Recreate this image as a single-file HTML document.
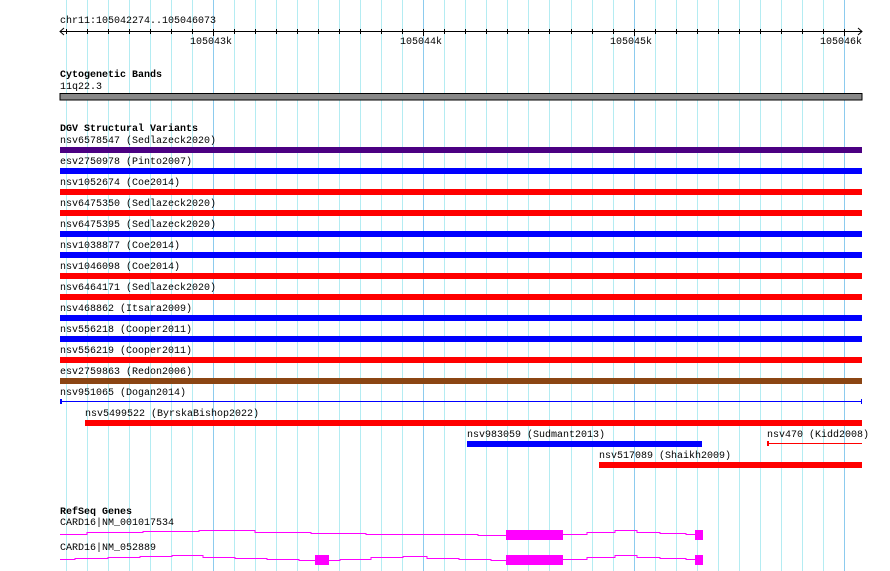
<!DOCTYPE html>
<html><head><meta charset="utf-8"><style>
html,body{margin:0;padding:0;background:#fff;width:890px;height:571px;overflow:hidden}
svg text{font-family:"Liberation Mono",monospace;font-size:10px;fill:#000}
</style></head><body>
<svg width="890" height="571" xmlns="http://www.w3.org/2000/svg">
<g id="grid"></g>
<g stroke="#000" stroke-width="1">
<line x1="60" y1="31.5" x2="862" y2="31.5"/>
<polyline points="64,28 60,31.5 64,35" fill="none"/>
<polyline points="858,28 862,31.5 858,35" fill="none"/>
<g id="ticks"></g>
</g>
<text x="60" y="23">chr11:105042274..105046073</text>
<text x="190" y="44">105043k</text>
<text x="400" y="44">105044k</text>
<text x="610" y="44">105045k</text>
<text x="820" y="44">105046k</text>

<text x="60" y="77" font-weight="bold">Cytogenetic Bands</text>
<text x="60" y="89">11q22.3</text>
<rect x="60" y="93.5" width="802" height="6.5" fill="#888" stroke="#000"/>

<text x="60" y="131" font-weight="bold">DGV Structural Variants</text>
<g id="rows"></g>

<text x="60" y="395">nsv951065 (Dogan2014)</text>
<line x1="60" y1="401.5" x2="862" y2="401.5" stroke="#0000ff"/>
<rect x="60" y="399" width="2" height="5" fill="#0000ff"/>
<rect x="861" y="399" width="1" height="5" fill="#0000ff"/>
<text x="85" y="416">nsv5499522 (ByrskaBishop2022)</text>
<rect x="85" y="420" width="777" height="6" fill="#ff0000"/>
<text x="467" y="437">nsv983059 (Sudmant2013)</text>
<rect x="467" y="441" width="235" height="6" fill="#0000ff"/>
<text x="767" y="437">nsv470 (Kidd2008)</text>
<line x1="767" y1="443.5" x2="862" y2="443.5" stroke="#ff0000"/>
<rect x="767" y="441" width="2" height="5" fill="#ff0000"/>
<text x="599" y="458">nsv517089 (Shaikh2009)</text>
<rect x="599" y="462" width="263" height="6" fill="#ff0000"/>

<text x="60" y="514" font-weight="bold">RefSeq Genes</text>
<text x="60" y="525">CARD16|NM_001017534</text>
<polyline fill="none" stroke="#ff00ff" points="60,534.5 87,534.5 87,532.5 143,532.5 143,531.5 199,531.5 199,530.5 255,530.5 255,532.5 311,532.5 311,533.5 366,533.5 366,534.5 478,534.5 478,535.5 506,535.5"/>
<polyline fill="none" stroke="#ff00ff" points="563,534.5 587,534.5 587,532.5 615,532.5 615,530.5 637,530.5 637,532.5 660,532.5 660,533.5 686,533.5 686,534.5 695,534.5"/>
<rect x="506" y="530" width="57" height="10" fill="#ff00ff"/>
<rect x="695" y="530" width="8" height="10" fill="#ff00ff"/>
<text x="60" y="550">CARD16|NM_052889</text>
<polyline fill="none" stroke="#ff00ff" points="60,559.5 75,559.5 75,558.5 108,558.5 108,557.5 140,557.5 140,556.5 172,556.5 172,555.5 203,555.5 203,557.5 235,557.5 235,558.5 267,558.5 267,559.5 299,559.5 299,560.5 315,560.5"/>
<polyline fill="none" stroke="#ff00ff" points="329,560.5 340,560.5 340,559.5 371,559.5 371,557.5 403,557.5 403,556.5 427,556.5 427,558.5 459,558.5 459,559.5 491,559.5 491,560.5 506,560.5"/>
<rect x="315" y="555" width="14" height="10" fill="#ff00ff"/>
<polyline fill="none" stroke="#ff00ff" points="563,559.5 587,559.5 587,557.5 615,557.5 615,555.5 637,555.5 637,557.5 660,557.5 660,558.5 686,558.5 686,559.5 695,559.5"/>
<rect x="506" y="555" width="57" height="10" fill="#ff00ff"/>
<rect x="695" y="555" width="8" height="10" fill="#ff00ff"/>
</svg>
<script>
var ns="http://www.w3.org/2000/svg";
var g=document.getElementById("grid"),t=document.getElementById("ticks"),r=document.getElementById("rows");
for(var k=-8;k<31;k++){var x=Math.round(213+21.03*k);if(x<60||x>862)continue;var l=document.createElementNS(ns,"line");
var major=(k%10==0);l.setAttribute("x1",x+.5);l.setAttribute("x2",x+.5);l.setAttribute("y1",0);l.setAttribute("y2",571);
l.setAttribute("stroke",major?"#8ccbee":"#b4ecf2");g.appendChild(l);
var tk=document.createElementNS(ns,"line");tk.setAttribute("x1",x+.5);tk.setAttribute("x2",x+.5);tk.setAttribute("y1",29);tk.setAttribute("y2",major?36:34);t.appendChild(tk);}
var rows=[["nsv6578547 (Sedlazeck2020)","#4b0082"],["esv2750978 (Pinto2007)","#0000ff"],["nsv1052674 (Coe2014)","#ff0000"],["nsv6475350 (Sedlazeck2020)","#ff0000"],["nsv6475395 (Sedlazeck2020)","#0000ff"],["nsv1038877 (Coe2014)","#0000ff"],["nsv1046098 (Coe2014)","#ff0000"],["nsv6464171 (Sedlazeck2020)","#ff0000"],["nsv468862 (Itsara2009)","#0000ff"],["nsv556218 (Cooper2011)","#0000ff"],["nsv556219 (Cooper2011)","#ff0000"],["esv2759863 (Redon2006)","#8b4513"]];
rows.forEach(function(d,i){var y=143+21*i;var tx=document.createElementNS(ns,"text");tx.setAttribute("x",60);tx.setAttribute("y",y);tx.textContent=d[0];r.appendChild(tx);
var b=document.createElementNS(ns,"rect");b.setAttribute("x",60);b.setAttribute("y",y+4);b.setAttribute("width",802);b.setAttribute("height",6);b.setAttribute("fill",d[1]);r.appendChild(b);});
</script>
</body></html>
